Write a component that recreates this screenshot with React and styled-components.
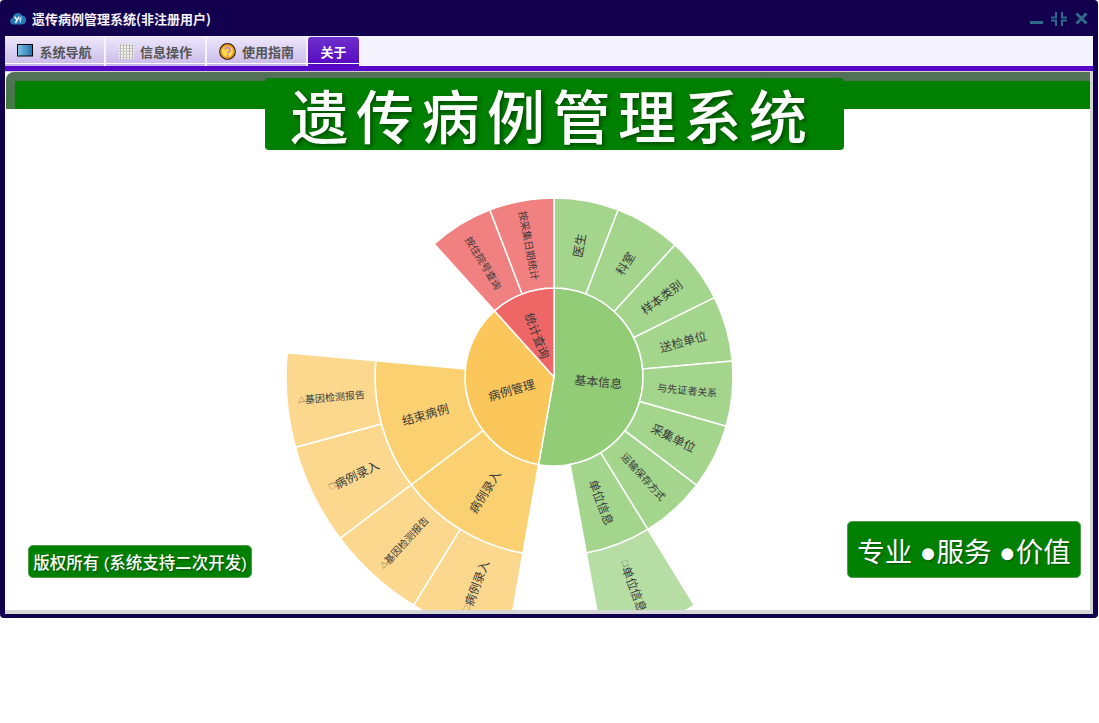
import React from "react";
import styled, { createGlobalStyle } from "styled-components";

const GlobalStyle = createGlobalStyle`
  html, body {
    margin: 0;
    padding: 0;
    background: #fff;
    font-family: "Noto Sans CJK SC", "Liberation Sans", sans-serif;
  }
`;

const Window = styled.div`
  width: 1098px;
  height: 618px;
  box-sizing: border-box;
  background: #12004e;
  border-radius: 4px;
  padding: 0 5px 4px 5px;
  display: flex;
  flex-direction: column;
`;

const TitleBar = styled.div`
  height: 36px;
  flex: none;
  display: flex;
  align-items: center;
  padding-left: 5px;
  gap: 6px;
`;

const TitleText = styled.div`
  color: #f4f2fa;
  font-size: 13px;
  font-weight: 700;
  flex: 1;
`;

const Controls = styled.div`
  display: flex;
  align-items: center;
  gap: 8px;
  padding-right: 5px;
  margin-top: 1px;
`;

const TabBar = styled.div`
  height: 30px;
  flex: none;
  box-sizing: border-box;
  background: #f5f3fd;
  display: flex;
  gap: 2px;
  padding-top: 1px;
`;

const Tab = styled.div`
  width: ${(p) => p.$width}px;
  height: 29px;
  box-sizing: border-box;
  padding-bottom: 1px;
  border-radius: 3px 3px 0 0;
  box-shadow:
    inset 0 -2px 0 ${(p) => (p.$active ? "#5608c0" : "#c8b4e4")},
    inset 0 -3px 0 #fff;
  background: ${(p) =>
    p.$active
      ? "linear-gradient(#6d30cc, #5608c0)"
      : "linear-gradient(#ece6fa, #c9b9e8)"};
  color: ${(p) => (p.$active ? "#fff" : "#555")};
  font-size: 13px;
  font-weight: 700;
  display: flex;
  align-items: center;
  justify-content: center;
  gap: 6px;
`;

const Rule = styled.div`
  height: 6px;
  flex: none;
  background: #5808c8;
  border-bottom: 1px solid #cfcfcf;
  box-sizing: border-box;
`;

const Panel = styled.div`
  position: relative;
  flex: 1;
  min-height: 0;
  background: #fff;
  border-right: 3px solid #d4d4d4;
  border-bottom: 4px solid #d6d6d6;
  display: flex;
  flex-direction: column;
  overflow: hidden;
`;

const Band = styled.div`
  height: 37px;
  flex: none;
  margin-left: 1px;
  border-radius: 8px 0 0 0;
  background:
    linear-gradient(#008000, #008000) 9px 9px no-repeat,
    linear-gradient(#55705a, #3f7a3f);
  display: flex;
  justify-content: center;
  align-items: flex-start;
  padding-top: 6px;
  box-sizing: border-box;
  position: relative;
  z-index: 1;
`;

const Banner = styled.div`
  width: 579px;
  height: 72px;
  flex: none;
  margin-left: 12px;
  padding-right: 3px;
  box-sizing: border-box;
  background: #008000;
  border-radius: 4px;
  color: #fff;
  font-size: 58px;
  font-weight: 500;
  line-height: 72px;
  letter-spacing: 7.5px;
  text-align: center;
  text-shadow: 2px 2px 4px rgba(0, 0, 0, 0.45);
  white-space: nowrap;
`;

const ChartArea = styled.div`
  flex: 1;
  min-height: 0;
  overflow: hidden;
  padding: 81px 0 0 279px;
`;

const Badge = styled.div`
  position: absolute;
  ${(p) => (p.$right ? "right: 9px;" : "left: 23px;")}
  bottom: 32px;
  box-sizing: border-box;
  background: #008000;
  border: 1px solid #4f9c4f;
  border-radius: 5px;
  color: #fff;
  font-family: "Liberation Sans", "Noto Sans CJK SC", sans-serif;
  font-size: ${(p) => (p.$right ? 27.5 : 16.5)}px;
  font-weight: ${(p) => (p.$right ? 400 : 500)};
  width: ${(p) => (p.$right ? 234 : 224)}px;
  height: ${(p) => (p.$right ? 57 : 33)}px;
  display: flex;
  align-items: center;
  justify-content: center;
  white-space: nowrap;
  text-shadow: 1px 1px 2px rgba(0, 0, 0, 0.4);
`;

const Slice = styled.path`
  fill: ${(p) => p.$fill};
  stroke: #fff;
  stroke-width: 1.5;
`;

const SliceLabel = styled.text`
  fill: #3a3a3a;
  font-size: ${(p) => p.$size}px;
  text-anchor: middle;
  dominant-baseline: central;
`;

const LabelMark = styled.tspan`
  font-size: 7px;
`;

const CX = 270;
const CY = 187;
const R = [0, 89, 179, 268];

const GREEN = ["#92cc76", "#a3d58d", "#b6dda4"];
const ORANGE = ["#fbc65a", "#fbd071", "#fcd88f"];
const RED = ["#ee6666", "#f18080"];

// ring, from, to (degrees clockwise from north), fill, text, size, mark
const slices = [
  [0, 0, 190, GREEN[0], "基本信息", 12],
  [0, 190, 318, ORANGE[0], "病例管理", 12],
  [0, 318, 360, RED[0], "统计查询", 12],
  [1, 0, 21, GREEN[1], "医生", 12],
  [1, 21, 42.5, GREEN[1], "科室", 12],
  [1, 42.5, 63.7, GREEN[1], "样本类别", 12],
  [1, 63.7, 84.9, GREEN[1], "送检单位", 12],
  [1, 84.9, 106, GREEN[1], "与先证者关系", 10],
  [1, 106, 127.2, GREEN[1], "采集单位", 12],
  [1, 127.2, 148.4, GREEN[1], "运输保存方式", 10],
  [1, 148.4, 169.6, GREEN[1], "单位信息", 12],
  [2, 148.4, 169.6, GREEN[2], "单位信息", 12, "□"],
  [1, 190, 233, ORANGE[1], "病例录入", 12],
  [1, 233, 275.2, ORANGE[1], "结束病例", 12],
  [2, 190, 211.6, ORANGE[2], "病例录入", 12, "□"],
  [2, 211.6, 233, ORANGE[2], "基因检测报告", 10, "△"],
  [2, 233, 254.8, ORANGE[2], "病例录入", 12, "□"],
  [2, 254.8, 275.2, ORANGE[2], "基因检测报告", 10, "△"],
  [1, 318, 339, RED[1], "按住院号查询", 10],
  [1, 339, 360, RED[1], "按采集日期统计", 10],
];

const polar = (r, deg) => {
  const a = (deg * Math.PI) / 180;
  return [CX + r * Math.sin(a), CY - r * Math.cos(a)];
};

const arcPath = (r0, r1, from, to) => {
  const large = to - from > 180 ? 1 : 0;
  const [x0, y0] = polar(r1, from);
  const [x1, y1] = polar(r1, to);
  const [x2, y2] = polar(r0, to);
  const [x3, y3] = polar(r0, from);
  if (r0 === 0) return `M${CX} ${CY}L${x0} ${y0}A${r1} ${r1} 0 ${large} 1 ${x1} ${y1}Z`;
  return `M${x0} ${y0}A${r1} ${r1} 0 ${large} 1 ${x1} ${y1}L${x2} ${y2}A${r0} ${r0} 0 ${large} 0 ${x3} ${y3}Z`;
};

const Sunburst = () => (
  <svg width="540" height="440" viewBox="0 0 540 440" style={{ display: "block" }}>
    {slices.map(([ring, from, to, fill], i) => (
      <Slice key={i} d={arcPath(R[ring], R[ring + 1], from, to)} $fill={fill} />
    ))}
    {slices.map(([ring, from, to, , label, size, mark], i) => {
      const mid = (from + to) / 2;
      const [x, y] = polar((R[ring] + R[ring + 1]) / 2, mid);
      const rot = mid > 180 ? mid - 270 : mid - 90;
      return (
        <SliceLabel key={i} x={x} y={y} $size={size} transform={`rotate(${rot} ${x} ${y})`}>
          {mark && <LabelMark>{mark}</LabelMark>}
          {label}
        </SliceLabel>
      );
    })}
  </svg>
);

const CloudIcon = () => (
  <svg width="16" height="14" viewBox="0 0 16 14">
    <path d="M3.6 13.5a3.4 3.4 0 0 1-.8-6.7A5 5 0 0 1 12 4.4a4.6 4.6 0 0 1 .4 9.1z" fill="#2378b8" />
    <path d="M4.6 5.6l2.4 3.6 2.2-3.6M7 9.2l-1.6 3" stroke="#fff" strokeWidth="1.5" fill="none" />
    <path d="M10.2 11.5V7.4c0-.9.6-1.2 1.6-1.2M9.4 8.4h2.2" stroke="#e8f4fc" strokeWidth="1" fill="none" />
  </svg>
);

const MonitorIcon = () => (
  <svg width="16" height="14" viewBox="0 0 16 14">
    <defs>
      <linearGradient id="screen" x1="0" y1="0" x2="1" y2="0">
        <stop offset="0" stopColor="#7fc4e4" />
        <stop offset="1" stopColor="#1f6fb0" />
      </linearGradient>
    </defs>
    <rect x="0.5" y="0.5" width="15" height="11.5" fill="url(#screen)" stroke="#000" />
  </svg>
);

const GridIcon = () => (
  <svg width="15" height="15" viewBox="0 0 15 15">
    <rect width="15" height="15" fill="#f2f2ee" />
    {[2, 5, 8, 11, 14].map((p) => (
      <g key={p}>
        <path d={`M${p - 0.5} 0V15`} stroke="#b8b8b0" />
        <path d={`M0 ${p - 0.5}H15`} stroke="#c8c8c0" />
      </g>
    ))}
  </svg>
);

const HelpIcon = () => (
  <svg width="17" height="17" viewBox="0 0 17 17">
    <circle cx="8.5" cy="8.5" r="7.8" fill="#ffd84a" stroke="#3a2008" strokeWidth="1.2" />
    <circle cx="8.5" cy="8.5" r="6.2" fill="none" stroke="#f08a1c" strokeWidth="1.2" />
    <path d="M6.2 6.6a2.4 2.2 0 1 1 3.6 2.1c-.9.5-1.3.9-1.3 1.9" stroke="#c07cc8" strokeWidth="1.7" fill="none" />
    <circle cx="8.5" cy="12.8" r="1" fill="#c07cc8" />
  </svg>
);

const MinimizeIcon = () => (
  <svg width="13" height="14" viewBox="0 0 13 14">
    <rect x="0" y="9" width="13" height="3" fill="#2d6a8c" />
  </svg>
);

const RestoreIcon = () => (
  <svg width="16" height="14" viewBox="0 0 16 14">
    <path d="M5 0v5.5H0M11 0v5.5h5M5 14V8.5H0M11 14V8.5h5" stroke="#2d6a8c" strokeWidth="2" fill="none" />
  </svg>
);

const CloseIcon = () => (
  <svg width="13" height="13" viewBox="0 0 13 13">
    <path d="M1.5 1.5l10 10M11.5 1.5l-10 10" stroke="#2d6a8c" strokeWidth="3" fill="none" />
  </svg>
);

const tabs = [
  { label: "系统导航", width: 99, icon: <MonitorIcon /> },
  { label: "信息操作", width: 99, icon: <GridIcon /> },
  { label: "使用指南", width: 99, icon: <HelpIcon /> },
  { label: "关于", width: 51, active: true },
];

export default function App() {
  return (
    <>
      <GlobalStyle />
      <Window>
        <TitleBar>
          <CloudIcon />
          <TitleText>遗传病例管理系统(非注册用户)</TitleText>
          <Controls>
            <MinimizeIcon />
            <RestoreIcon />
            <CloseIcon />
          </Controls>
        </TitleBar>
        <TabBar>
          {tabs.map((t) => (
            <Tab key={t.label} $width={t.width} $active={t.active}>
              {t.icon}
              {t.label}
            </Tab>
          ))}
        </TabBar>
        <Rule />
        <Panel>
          <Band>
            <Banner>遗传病例管理系统</Banner>
          </Band>
          <ChartArea>
            <Sunburst />
          </ChartArea>
          <Badge>版权所有 (系统支持二次开发)</Badge>
          <Badge $right>专业 ●服务 ●价值</Badge>
        </Panel>
      </Window>
    </>
  );
}
